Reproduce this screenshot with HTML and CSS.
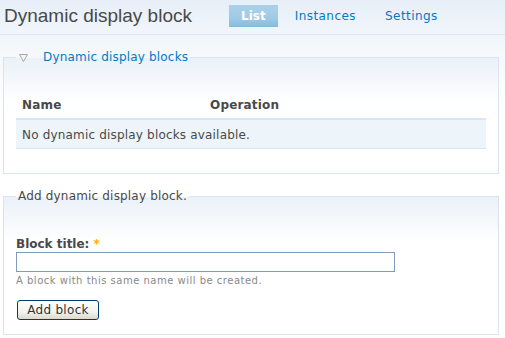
FILE: index.html
```html
<!DOCTYPE html>
<html lang="en">
<head>
    <meta charset="UTF-8">
    <title>Dynamic display block</title>
    <link rel="stylesheet" href="styles.css">
</head>
<body>
    <div class="header">
        <h1 class="title">Dynamic display block</h1>
        <ul class="tabs">
            <li class="active"><a href="#">List</a></li>
            <li><a href="#">Instances</a></li>
            <li><a href="#">Settings</a></li>
        </ul>
    </div>
    <div class="content">
        <fieldset class="collapsible">
            <legend>
                <a href="#"><svg class="toggle" width="9" height="8" viewBox="0 0 9 8"><path d="M0.5 0.5 H8.5 L4.5 7.5 Z" fill="#f4f4f4" stroke="#a8a8a8"/></svg>Dynamic display blocks</a>
            </legend>
            <table class="list">
                <thead>
                    <tr>
                        <th class="col-name">Name</th>
                        <th>Operation</th>
                    </tr>
                </thead>
                <tbody>
                    <tr class="odd">
                        <td colspan="2">No dynamic display blocks available.</td>
                    </tr>
                </tbody>
            </table>
        </fieldset>

        <fieldset>
            <legend>Add dynamic display block.</legend>
            <div class="form-item">
                <label for="block-title">Block title: <span class="required">*</span></label>
                <input type="text" id="block-title" class="form-text">
                <div class="description">A block with this same name will be created.</div>
            </div>
            <button class="form-submit">Add block</button>
        </fieldset>
    </div>
</body>
</html>
```

FILE: styles.css
```css
body {
    margin: 0;
    padding: 0;
    color: #494949;
    font-family: "DejaVu Sans", Verdana, sans-serif;
    font-size: 12px;
    line-height: 15px;
    letter-spacing: 0.18px;
    background: #fff linear-gradient(to bottom, #e6eef8 0, #f1f6fb 34px, #f6f9fc 60px, #fff 110px) no-repeat;
}
a {
    color: #027ac6;
    text-decoration: none;
}
.header {
    display: flex;
    align-items: flex-start;
    height: 34px;
    padding-left: 4px;
    border-bottom: 1px solid #dfe8f1;
}
.title {
    margin: 5px 0 0 0;
    width: 225px;
    font-family: "Liberation Sans", Arial, sans-serif;
    font-size: 19px;
    line-height: 22px;
    font-weight: normal;
    letter-spacing: 0;
    color: #494949;
}
.tabs {
    display: flex;
    gap: 5px;
    list-style: none;
    margin: 5px 0 0 0;
    padding: 0;
}
.tabs a {
    display: block;
    height: 21px;
    padding: 1px 12px 0 12px;
    line-height: 21px;
    letter-spacing: 0.45px;
}
.tabs .active a {
    color: #fff;
    font-weight: bold;
    letter-spacing: 0;
    background: linear-gradient(to bottom, #abd1e9 0, #9fcae6 60%, #86bbdd 100%);
}
.content {
    padding: 15px 6px 0 3px;
}
fieldset {
    margin: 0 0 15px 0;
    padding: 0 12px 0 12px;
    border: 1px solid #d8e5f0;
    background: linear-gradient(to bottom, #eaf1f8 0, #fff 45px);
}
legend {
    padding: 0 2px;
    line-height: 15px;
    color: #494949;
}
.collapsible legend {
    padding-left: 3px;
}
.toggle {
    margin: 0 15px -1px 0;
    vertical-align: 0;
}
.list {
    width: 100%;
    margin: 28px 0 24px 0;
    border-collapse: collapse;
}
.list th {
    text-align: left;
    padding: 5px 6px 5px 6px;
    border-bottom: 2px solid #d3e7f4;
}
.list .col-name {
    width: 176px;
}
.list td {
    padding: 8px 6px 5px 6px;
    background: #edf5fa;
    border-bottom: 1px solid #d3e7f4;
}
.form-item {
    margin-top: 33px;
}
label {
    display: block;
    font-weight: bold;
    letter-spacing: 0;
    margin-bottom: 0;
}
.required {
    color: #ffae00;
    margin-left: 0;
}
.form-text {
    display: block;
    box-sizing: border-box;
    width: 379px;
    height: 20px;
    margin: 0;
    border: 1px solid #7f9db9;
    background: #fff;
}
.description {
    font-size: 10px;
    line-height: 14px;
    color: #898989;
    margin-top: 2px;
    letter-spacing: 0.5px;
}
.form-submit {
    margin: 12px 0 14px 1px;
    width: 82px;
    height: 20px;
    padding: 0;
    font-family: "DejaVu Sans", Verdana, sans-serif;
    font-size: 12px;
    letter-spacing: 0.3px;
    color: #333;
    border: 1px solid #003c74;
    border-radius: 3px;
    background: linear-gradient(to bottom, #fff 0, #f4f3ee 60%, #dcd8cb 100%);
}
```
